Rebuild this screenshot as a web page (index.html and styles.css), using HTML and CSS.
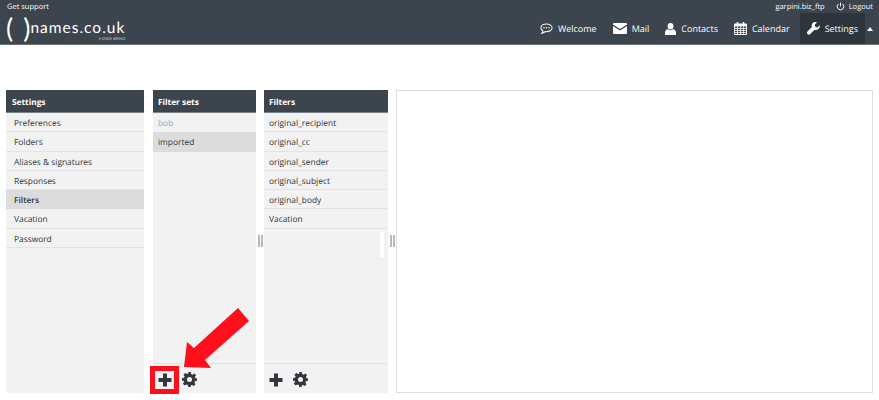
FILE: index.html
```html
<!DOCTYPE html>
<html lang="en">
<head>
<meta charset="utf-8">
<title>Settings - Filters</title>
<link rel="stylesheet" href="styles.css">
</head>
<body>
<header class="topbar">
  <div class="topline">
    <a class="support">Get support</a>
    <div class="account">
      <span>garpini.biz_ftp</span>
      <span class="logout">
        <svg class="i-logout" viewBox="0 0 12 12"><path d="M3.200 2.600a4.400 4.400 0 1 0 5.600 0" fill="none" stroke="#fff" stroke-width="1.300"/><path d="M6 .8v5" stroke="#fff" stroke-width="1.300"/></svg>
        Logout</span>
    </div>
  </div>
  <div class="mainline">
    <div class="logo">
      <span class="paren">(</span><span class="paren second">)</span>
      <div class="brand">
        <span class="brandname">names.co.uk</span>
        <span class="tag">A DADA BRAND</span>
      </div>
    </div>
    <nav class="nav">
      <a class="navitem">
        <svg class="ico" width="13" height="12" viewBox="0 0 14 13"><path d="M7 1C3.600 1 .9 2.800.9 5.200c0 1.400.9 2.600 2.300 3.400-.1.900-.5 1.700-1.200 2.400 1.400-.2 2.600-.8 3.500-1.700.5.100 1 .1 1.500.1 3.400 0 6.100-1.900 6.100-4.200S10.400 1 7 1z" fill="none" stroke="#fff" stroke-width="1.100"/><circle cx="4.300" cy="5.200" r=".8" fill="#fff"/><circle cx="7" cy="5.200" r=".8" fill="#fff"/><circle cx="9.700" cy="5.200" r=".8" fill="#fff"/></svg>
        Welcome</a>
      <a class="navitem">
        <svg class="ico" width="14" height="11" viewBox="0 0 14 11"><path d="M1 0h12a1 1 0 0 1 1 1v.6L7 6 0 1.600V1a1 1 0 0 1 1-1z" fill="#fff"/><path d="M0 3l7 4.400L14 3v7a1 1 0 0 1-1 1H1a1 1 0 0 1-1-1z" fill="#fff"/></svg>
        Mail</a>
      <a class="navitem">
        <svg class="ico" width="11" height="12" viewBox="0 0 11 12"><ellipse cx="5.500" cy="3.200" rx="2.900" ry="3.200" fill="#fff"/><path d="M0 12V9.500C0 7.800 1.400 6.500 3 6.300c.7.600 1.600.9 2.500.9s1.800-.3 2.500-.9c1.600.2 3 1.500 3 3.200V12z" fill="#fff"/></svg>
        Contacts</a>
      <a class="navitem">
        <svg class="ico" width="13" height="13" viewBox="0 0 13 13"><path d="M.5 2h12v10.500H.5z" fill="none" stroke="#fff"/><path d="M0 2h13v2.500H0z" fill="#fff"/><path d="M3.500 0v3M9.500 0v3" stroke="#fff" stroke-width="1.500"/><path d="M.5 6.500h12M.5 8.500h12M.5 10.500h12M3.500 4.500v8M6.500 4.500v8M9.500 4.500v8" stroke="#fff" stroke-width=".8"/></svg>
        Calendar</a>
      <a class="navitem active">
        <svg class="ico" width="13" height="13" viewBox="0 0 13 13"><path d="M12.700 3.200L10.400 5.400 8.300 4.800 7.700 2.700 9.900.4C8.400-.3 6.700 0 5.700 1 4.600 2.100 4.400 3.600 4.900 5L.5 9.400c-.7.700-.7 1.900 0 2.700.8.800 2 .8 2.700 0L7.700 7.700c1.300.5 2.900.2 4-.9 1-1 1.400-2.500 1-3.600z" fill="#fff"/></svg>
        Settings</a>
      <span class="caret"></span>
    </nav>
  </div>
</header>

<main class="workspace">
  <section class="panel settings">
    <h2 class="panelhead">Settings</h2>
    <ul class="list">
      <li>Preferences</li>
      <li>Folders</li>
      <li>Aliases &amp; signatures</li>
      <li>Responses</li>
      <li class="selected strong">Filters</li>
      <li>Vacation</li>
      <li>Password</li>
    </ul>
  </section>

  <section class="panel sets">
    <h2 class="panelhead">Filter sets</h2>
    <ul class="list compact">
      <li class="muted">bob</li>
      <li class="selected">imported</li>
    </ul>
    <footer class="tools">
      <svg class="tool" width="14" height="14" viewBox="0 0 14 14"><path d="M5 .5h4V5h4.500v4H9v4.500H5V9H.5V5H5z" fill="#32373d"/></svg>
      <svg class="tool" width="15" height="15" viewBox="0 0 24 24"><path d="M10 0h4l.7 3.300 2.100.9 2.900-1.800 2.800 2.800-1.800 2.900.9 2.100L24 10v4l-3.300.7-.9 2.100 1.800 2.900-2.800 2.800-2.900-1.800-2.100.9L14 24h-4l-.7-3.300-2.100-.9-2.900 1.800-2.800-2.800 1.800-2.900-.9-2.100L0 14v-4l3.300-.7.9-2.100-1.800-2.900 2.800-2.800 2.900 1.800 2.100-.9zM12 8a4 4 0 1 0 0 8 4 4 0 0 0 0-8z" fill="#32373d" fill-rule="evenodd"/></svg>
    </footer>
  </section>

  <section class="panel filters">
    <h2 class="panelhead">Filters</h2>
    <ul class="list compact">
      <li>original_recipient</li>
      <li>original_cc</li>
      <li>original_sender</li>
      <li>original_subject</li>
      <li>original_body</li>
      <li>Vacation</li>
    </ul>
    <footer class="tools">
      <svg class="tool" width="14" height="14" viewBox="0 0 14 14"><path d="M5 .5h4V5h4.500v4H9v4.500H5V9H.5V5H5z" fill="#32373d"/></svg>
      <svg class="tool" width="15" height="15" viewBox="0 0 24 24"><path d="M10 0h4l.7 3.300 2.100.9 2.900-1.800 2.800 2.800-1.800 2.900.9 2.100L24 10v4l-3.300.7-.9 2.100 1.800 2.900-2.800 2.800-2.900-1.800-2.100.9L14 24h-4l-.7-3.300-2.100-.9-2.900 1.800-2.800-2.800 1.800-2.900-.9-2.100L0 14v-4l3.300-.7.9-2.100-1.800-2.900 2.800-2.800 2.900 1.800 2.100-.9zM12 8a4 4 0 1 0 0 8 4 4 0 0 0 0-8z" fill="#32373d" fill-rule="evenodd"/></svg>
    </footer>
    <span class="scrollbar"></span>
    <span class="grip grip-left"></span>
    <span class="grip grip-right"></span>
  </section>

  <section class="contentframe"></section>

  <span class="redbox"></span>
  <svg class="arrow" width="72" height="72" viewBox="0 0 72 72"><path d="M55 2L66 15 22 54 28 62 1 61 4 36 11 42z" fill="#fe0f1b"/></svg>
</main>
</body>
</html>
```
FILE: styles.css
```css
* { box-sizing: border-box; }
html, body { margin: 0; padding: 0; }
body {
  width: 879px;
  height: 400px;
  overflow: hidden;
  background: #fff;
  font-family: "Open Sans", "Noto Sans", sans-serif;
  font-size: 8.400px;
  color: #2f3439;
  text-rendering: geometricPrecision;
}
.topbar {
  height: 45px;
  background: #3c444e;
  border-bottom: 1px solid #6b7177;
  color: #fff;
  position: relative;
}
.topline {
  height: 13px;
  display: flex;
  justify-content: space-between;
  align-items: center;
  padding: 0 6px 0 7px;
  font-size: 7.500px;
}
.account { display: flex; gap: 11px; align-items: center; }
.logout { display: flex; gap: 4px; align-items: center; }
.i-logout { width: 9px; height: 9px; }
.mainline {
  height: 31px;
  display: flex;
  justify-content: space-between;
}
.logo { position: relative; width: 130px; padding-left: 6px; display: flex; align-items: flex-start; }
.paren {
  font-family: "Lato", sans-serif;
  font-size: 27px;
  line-height: 30px;
}
.second { margin-left: 10px; }
.brand { display: flex; flex-direction: column; align-items: flex-end; margin-top: 7px; }
.brandname { font-family: "Lato", sans-serif; font-size: 15.500px; line-height: 16px; letter-spacing: 1px; }
.tag { font-size: 4px; line-height: 5px; font-style: italic; color: #d5d8db; margin-top: 1px; }
.nav { display: flex; align-items: stretch; }
.navitem {
  display: flex;
  align-items: center;
  gap: 5px;
  padding: 0 8px;
  font-size: 9px;
  color: #fff;
}
.navitem.active { background: #2e343b; padding: 0 7px; margin-left: 2px; }
.caret {
  width: 14px;
  position: relative;
}
.caret::after {
  content: "";
  position: absolute;
  left: 2px;
  top: 14px;
  border-left: 3.500px solid transparent;
  border-right: 3.500px solid transparent;
  border-bottom: 4px solid #fff;
}
.workspace {
  position: relative;
  display: flex;
  gap: 8px;
  padding: 45px 6px 0 6px;
  height: 348px;
}
.panel {
  position: relative;
  display: flex;
  flex-direction: column;
  background: #f2f2f2;
}
.settings { width: 138px; margin-right: 1px; }
.sets { width: 103px; }
.filters { width: 124px; }
.panelhead {
  margin: 0;
  height: 23px;
  line-height: 25px;
  padding: 0 6px;
  background: #3c444e;
  border-bottom: 1px solid #76818a;
  color: #fff;
  font-size: 8.300px;
  font-weight: 700;
}
.sets .panelhead { padding: 0 5px; }
.filters .panelhead { padding: 0 5px; }
.list { list-style: none; margin: 0; padding: 0; flex: 1; }
.list li {
  height: 19.250px;
  line-height: 21px;
  padding: 0 8px;
  border-bottom: 1px solid #e3e3e3;
  font-size: 8.400px;
}
.compact li { padding: 0 5px; }
.list li.selected { background: #dcdcdc; border-bottom-color: #dcdcdc; }
.list li.strong { font-weight: 600; }
.list li.muted { color: #a9a9a9; border-bottom-color: #f2f2f2; }
.tools {
  height: 30px;
  border-top: 1px solid #e3e3e3;
  display: flex;
  align-items: center;
  gap: 10px;
  padding: 2px 0 0 5px;
}
.contentframe {
  flex: 1;
  background: #fff;
  border: 1px solid #dedede;
}
.scrollbar {
  position: absolute;
  right: 4px;
  top: 142px;
  width: 4px;
  height: 25px;
  background: #fff;
}
.grip {
  position: absolute;
  top: 145px;
  width: 5px;
  height: 12px;
  border-left: 2px solid #b5b9bd;
  border-right: 2px solid #b5b9bd;
}
.grip-left { left: -6px; }
.grip-right { right: -7px; }
.redbox {
  position: absolute;
  left: 150px;
  top: 321px;
  width: 29px;
  height: 28px;
  border: 5px solid #fe0f1b;
}
.arrow {
  position: absolute;
  left: 183px;
  top: 261px;
}
```
